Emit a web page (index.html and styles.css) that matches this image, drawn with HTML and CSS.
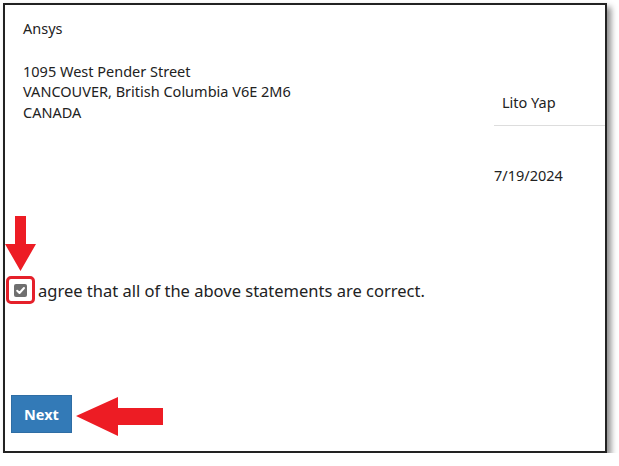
FILE: index.html
```html
<!DOCTYPE html>
<html>
<head>
<meta charset="utf-8">
<link rel="stylesheet" href="styles.css">
</head>
<body>
<div class="frame">
  <div class="info">
    <div class="left">
      <div class="company">Ansys</div>
      <div class="address">
        <div>1095 West Pender Street</div>
        <div>VANCOUVER, British Columbia V6E 2M6</div>
        <div>CANADA</div>
      </div>
    </div>
    <div class="right">
      <div class="name">Lito Yap</div>
      <div class="date">7/19/2024</div>
    </div>
  </div>
  <label class="agree">
    <span class="check-wrap">
      <span class="check">
        <svg width="13" height="13" viewBox="0 0 13 13"><path d="M3.2 6.8 L5.5 9 L10 4" fill="none" stroke="#fff" stroke-width="2" stroke-linecap="round" stroke-linejoin="round"/></svg>
      </span>
    </span>
    <span class="agree-text">agree that all of the above statements are correct.</span>
  </label>
  <div class="actions">
    <button class="next">Next</button>
  </div>
  <svg class="arrow-down" width="32" height="56" viewBox="0 0 32 56"><polygon points="10,0 21,0 21,28 31,28 15.5,55 0,28 10,28" fill="#ed1c24"/></svg>
  <svg class="arrow-left" width="90" height="40" viewBox="0 0 90 40"><polygon points="0,19 42,0 42,11 87,11 87,28 42,28 42,39" fill="#ed1c24"/></svg>
</div>
</body>
</html>
```

FILE: styles.css
```css
html, body {
  margin: 0;
  padding: 0;
  background: #fff;
}
body {
  font-family: "Noto Sans", "Open Sans", sans-serif;
  color: #222;
}
.frame {
  position: relative;
  box-sizing: border-box;
  margin: 3px 0 0 3px;
  width: 604px;
  height: 450px;
  border: 2px solid #222;
  box-shadow: 4px 4px 6px rgba(0,0,0,0.45);
}
.info {
  display: flex;
  font-size: 14.5px;
  line-height: 20.5px;
}
.left {
  flex: 1;
  padding: 13px 0 0 18px;
}
.company {
  margin-bottom: 22px;
}
.right {
  width: 111px;
  padding-top: 87px;
}
.name {
  padding: 0 0 12px 8px;
  border-bottom: 1px solid #ddd;
}
.date {
  padding-top: 39px;
}
.agree {
  display: flex;
  align-items: center;
  margin-top: 91px;
  margin-left: 1px;
  font-size: 16.5px;
}
.check-wrap {
  box-sizing: border-box;
  width: 29px;
  height: 28px;
  border: 3px solid #e5202a;
  border-radius: 5px;
  display: flex;
  align-items: center;
  justify-content: center;
}
.check {
  width: 13px;
  height: 13px;
  background: #6f6f6f;
  border-radius: 2px;
  display: flex;
}
.agree-text {
  margin-left: 3px;
}
.actions {
  margin-top: 91px;
  padding-left: 6px;
}
.next {
  width: 61px;
  height: 38px;
  background: #337ab7;
  border: 1px solid #2e6da4;
  color: #fff;
  font-family: "Noto Sans", sans-serif;
  font-weight: 700;
  font-size: 14.5px;
  padding: 0;
}
.arrow-down {
  position: absolute;
  left: 0px;
  top: 211px;
}
.arrow-left {
  position: absolute;
  left: 71px;
  top: 392px;
}
```
